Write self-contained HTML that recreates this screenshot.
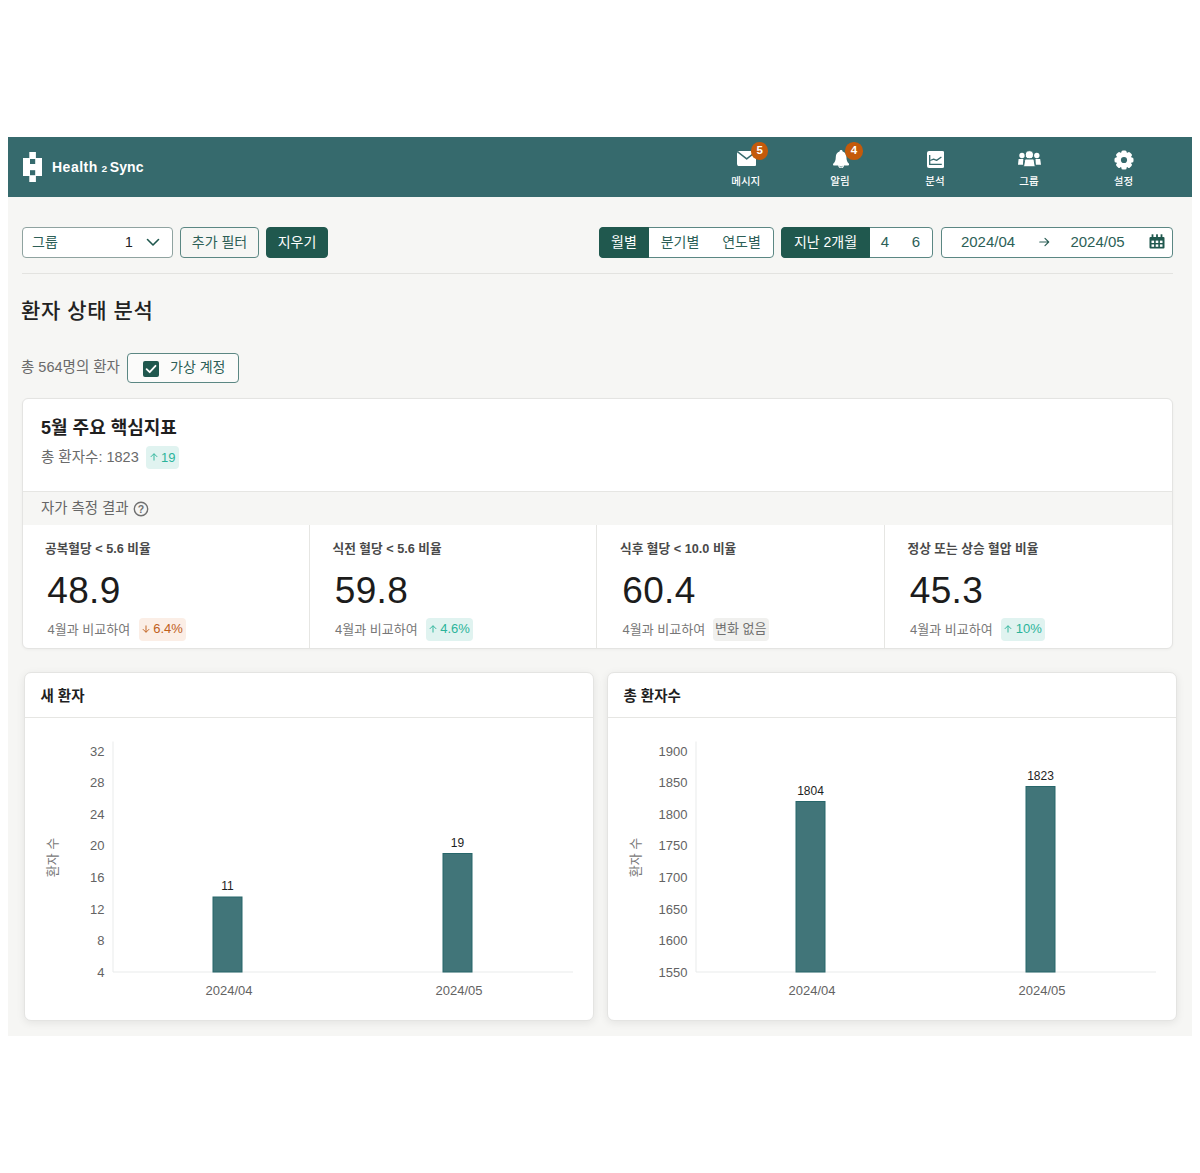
<!DOCTYPE html>
<html lang="ko">
<head>
<meta charset="utf-8">
<title>Health2Sync</title>
<style>
*{box-sizing:border-box;margin:0;padding:0}
html,body{width:1200px;height:1173px;background:#fff;overflow:hidden}
body{font-family:"Liberation Sans","Noto Sans CJK KR",sans-serif;color:#222;position:relative}
.abs,.t{position:absolute}
.t{white-space:nowrap;line-height:1}
#bg{position:absolute;left:8px;top:137px;width:1184px;height:899px;background:#f6f6f4}
#hdr{position:absolute;left:8px;top:137px;width:1184px;height:60px;background:#366a6d}
.nav{position:absolute;top:0;height:60px;width:80px;color:#fff;text-align:center}
.nav .lbl{position:absolute;left:0;right:0;top:38px;font-size:10px;line-height:12px;color:#fff}
.badge{position:absolute;width:17.400px;height:17.400px;border-radius:50%;background:#c45a0b;color:#fff;font-size:11.500px;line-height:17.400px;text-align:center;font-weight:700}
.navl{width:80px;text-align:center;font-size:10.500px;font-weight:500;line-height:12px;color:#fff}
.seg{font-size:14px;line-height:31px;text-align:center;color:#2d5f57}
.klabel{font-size:12.700px;font-weight:700;color:#4a4a4a}
.knum{letter-spacing:.3px;font-size:37px;color:#1c1c1c}
.kcmp{font-size:13px;color:#777}
.kb{position:absolute;height:22.500px;line-height:22.500px;border-radius:4px;font-size:13px;text-align:center;white-space:nowrap}
.kb.up{background:#e0f3f0;color:#2bb39a}
.kb.down{background:#fbeee6;color:#c0601c}
.kb.none{background:#f0f0ee;color:#707070}
.btn{position:absolute;height:31px;border:1px solid #5b8783;border-radius:4px;background:#f6f6f4;color:#2d5f57;font-size:14px;line-height:29px;text-align:center;white-space:nowrap}
.btn.dark{background:#20584e;border-color:#20584e;color:#fff}
.card{position:absolute;background:#fff;border:1px solid #e4e4e2;border-radius:6px}
.shadow{box-shadow:0 2px 8px rgba(0,0,0,.08)}
</style>
</head>
<body>
<div id="bg"></div>
<div id="hdr"></div>

<svg class="abs" style="left:23px;top:152px" width="19" height="30" viewBox="0 0 19 30"><g fill="#fff"><rect x="6.3" y="0" width="6.6" height="6.2"/><rect x="0" y="6" width="19" height="18"/><rect x="6.3" y="23.8" width="6.6" height="6.2"/></g><rect x="7" y="7" width="5.2" height="5" fill="#366a6d"/><rect x="7" y="18.2" width="5.2" height="5" fill="#366a6d"/></svg>
<div class="t" style="left:52px;top:160px;font-size:14px;font-weight:700;color:#fff;letter-spacing:.5px">Health<span style="display:inline-block;font-size:8.500px;font-weight:700;margin:0 3.200px 0 4px;letter-spacing:0;transform:scaleX(1.200)">2</span><span style="letter-spacing:.1px">Sync</span></div>

<svg class="abs" style="left:736.7px;top:151px" width="19.4" height="15.2" viewBox="0 0 19.4 15.2"><rect width="19.4" height="15.2" rx="2.4" fill="#fff"/><path d="M0.3 0.6 L9.7 7.9 L19.1 0.6" fill="none" stroke="#366a6d" stroke-width="1.5" stroke-linejoin="round"/></svg>
<div class="badge" style="left:751px;top:142.200px">5</div>
<div class="t navl" style="left:705.8px;top:175px">메시지</div>

<svg class="abs" style="left:832.800px;top:149.900px" width="16.400" height="18.400" viewBox="0 0 16.400 18.400"><path fill="#fff" d="M8.100 0 C9 0 9.600 .600 9.600 1.400 C12 2.100 13.400 4.200 13.400 6.800 C13.400 10.600 14.400 12.200 15.800 13.500 C16.500 14.200 16.200 15.600 15.100 15.600 L11 15.600 C10.900 17.200 9.700 18.300 8.100 18.300 C6.500 18.300 5.300 17.200 5.200 15.600 L1.100 15.600 C0 15.600 -.300 14.200 .400 13.500 C1.800 12.200 2.800 10.600 2.800 6.800 C2.800 4.200 4.200 2.100 6.600 1.400 C6.600 .600 7.200 0 8.100 0 Z"/><path d="M6.700 15.900 C6.800 16.600 7.400 17.100 8.100 17.100 C8.800 17.100 9.400 16.600 9.500 15.900" fill="none" stroke="#366a6d" stroke-width=".700"/></svg>
<div class="badge" style="left:845.200px;top:142.200px">4</div>
<div class="t navl" style="left:800px;top:175px">알림</div>

<svg class="abs" style="left:926.8px;top:151.1px" width="17.4" height="17" viewBox="0 0 17.4 17"><rect width="17.4" height="17" rx="2" fill="#fff"/><path d="M2.7 3.9 V13.4 H14.8" fill="none" stroke="#366a6d" stroke-width="1.3"/><path d="M3.2 9.5 L6.6 8.1 L9.6 9.4 L14.4 6" fill="none" stroke="#366a6d" stroke-width="1.3" stroke-linejoin="round"/></svg>
<div class="t navl" style="left:895px;top:175px">분석</div>

<svg class="abs" style="left:1017px;top:150px" width="25" height="18" viewBox="0 0 25 18"><g fill="#fff"><circle cx="5" cy="5.5" r="2.7"/><path d="M1.600 9 H6.300 L6 14.700 H1 Z"/><circle cx="19.800" cy="5.500" r="2.700"/><path d="M18.500 9 H23.200 L24 14.700 H18.800 Z"/></g><g fill="#fff" stroke="#366a6d" stroke-width="1"><circle cx="12.400" cy="4.800" r="4.100"/><path d="M9.300 9 H15.500 C16.500 9 17 9.600 17.200 10.500 L18.300 16.800 H6.500 L7.600 10.500 C7.800 9.600 8.300 9 9.300 9 Z"/></g></svg>
<div class="t navl" style="left:989px;top:175px">그룹</div>

<svg class="abs" style="left:1113.800px;top:149.900px" width="20" height="20" viewBox="-10 -10 20 20"><g fill="#fff"><circle r="7.900"/><rect x="-2.600" y="-9.500" width="5.200" height="5" rx="1.500" transform="rotate(0)"/><rect x="-2.600" y="-9.500" width="5.200" height="5" rx="1.500" transform="rotate(45)"/><rect x="-2.600" y="-9.500" width="5.200" height="5" rx="1.500" transform="rotate(90)"/><rect x="-2.600" y="-9.500" width="5.200" height="5" rx="1.500" transform="rotate(135)"/><rect x="-2.600" y="-9.500" width="5.200" height="5" rx="1.500" transform="rotate(180)"/><rect x="-2.600" y="-9.500" width="5.200" height="5" rx="1.500" transform="rotate(225)"/><rect x="-2.600" y="-9.500" width="5.200" height="5" rx="1.500" transform="rotate(270)"/><rect x="-2.600" y="-9.500" width="5.200" height="5" rx="1.500" transform="rotate(315)"/></g><circle r="3.100" fill="#366a6d"/></svg>
<div class="t navl" style="left:1083.500px;top:175px">설정</div>
<!--HEADER-->

<div class="btn" style="left:22px;top:227px;width:151px;background:#fff;border-color:#8fa3a0"></div>
<div class="t" style="left:32px;top:235px;font-size:14px;color:#2d5f57">그룹</div>
<div class="t" style="left:125px;top:235px;font-size:14px;color:#222">1</div>
<svg class="abs" style="left:146px;top:238px" width="14" height="9" viewBox="0 0 14 9"><path d="M1.500 1.500 L7 7 L12.500 1.500" fill="none" stroke="#20584e" stroke-width="1.600" stroke-linecap="round" stroke-linejoin="round"/></svg>
<div class="btn" style="left:180px;top:227px;width:79px">추가 필터</div>
<div class="btn dark" style="left:266px;top:227px;width:62px">지우기</div>

<div class="btn" style="left:599px;top:227px;width:175px;background:#fff"></div>
<div class="btn dark" style="left:599px;top:227px;width:50px;border-radius:4px 0 0 4px">월별</div>
<div class="t seg" style="left:650px;top:227px;width:60px">분기별</div>
<div class="t seg" style="left:711px;top:227px;width:61px">연도별</div>

<div class="btn" style="left:781px;top:227px;width:152px;background:#fff"></div>
<div class="btn dark" style="left:781px;top:227px;width:89px;border-radius:4px 0 0 4px">지난 2개월</div>
<div class="t seg" style="left:870px;top:226.300px;width:30px;font-size:15px">4</div>
<div class="t seg" style="left:901px;top:226.300px;width:30px;font-size:15px">6</div>

<div class="btn" style="left:941px;top:227px;width:232px;background:#fff"></div>
<div class="t seg" style="left:958px;top:226px;width:60px;font-size:15px">2024/04</div>
<svg class="abs" style="left:1038.700px;top:236.500px" width="11" height="10" viewBox="0 0 11 10"><path d="M0.800 5 H9.600 M6 1.400 L9.700 5 L6 8.600" fill="none" stroke="#2d5f57" stroke-width="1.200" stroke-linecap="round" stroke-linejoin="round"/></svg>
<div class="t seg" style="left:1067.500px;top:226px;width:60px;font-size:15px">2024/05</div>
<svg class="abs" style="left:1149px;top:234px" width="16" height="15" viewBox="0 0 16 15"><g fill="#20584e"><rect x="0.500" y="3" width="15" height="11.500" rx="1"/><rect x="2.600" y="0.300" width="1.800" height="4" /><rect x="7.100" y="0.300" width="1.800" height="4"/><rect x="11.600" y="0.300" width="1.800" height="4"/></g><g fill="#fff"><rect x="2.500" y="6.600" width="2.600" height="2.400"/><rect x="6.700" y="6.600" width="2.600" height="2.400"/><rect x="10.900" y="6.600" width="2.600" height="2.400"/><rect x="2.500" y="10.400" width="2.600" height="2.400"/><rect x="6.700" y="10.400" width="2.600" height="2.400"/><rect x="10.900" y="10.400" width="2.600" height="2.400"/></g></svg>

<div class="abs" style="left:22px;top:273px;width:1151px;height:1px;background:#e3e3e0"></div>
<!--FILTER-->

<div class="t" style="left:21px;top:300px;font-size:21px;letter-spacing:.6px;font-weight:500;color:#222">환자 상태 분석</div>
<div class="t" style="left:21px;top:360px;font-size:14.500px;color:#6a6a6a">총 564명의 환자</div>
<div class="btn" style="left:127px;top:353px;width:112px;height:30px;background:#fbfbfa"></div>
<svg class="abs" style="left:143px;top:361px" width="16" height="16" viewBox="0 0 16 16"><rect width="16" height="16" rx="2" fill="#20584e"/><path d="M3.600 8.200 L6.700 11.200 L12.500 4.800" fill="none" stroke="#fff" stroke-width="1.800" stroke-linecap="round" stroke-linejoin="round"/></svg>
<div class="t" style="left:170px;top:360px;font-size:14px;color:#2d5f57">가상 계정</div>
<!--TITLE-->

<div class="card" style="left:22px;top:398px;width:1151px;height:251px;overflow:hidden;box-shadow:0 1px 3px rgba(0,0,0,.04)">
  <div class="abs" style="left:0;top:92px;width:1149px;height:1px;background:#e6e6e3"></div>
  <div class="abs" style="left:0;top:93px;width:1149px;height:33px;background:#f6f6f4"></div>
  <div class="abs" style="left:286px;top:126px;width:1px;height:124px;background:#e6e6e3"></div>
  <div class="abs" style="left:573px;top:126px;width:1px;height:124px;background:#e6e6e3"></div>
  <div class="abs" style="left:860.600px;top:126px;width:1px;height:124px;background:#e6e6e3"></div>
</div>
<div class="t" style="left:41px;top:419px;font-size:18px;font-weight:700;color:#1f1f1f">5월 주요 핵심지표</div>
<div class="t" style="left:41px;top:450px;font-size:14.500px;color:#6a6a6a">총 환자수: 1823</div>
<div class="kb up" style="left:146px;top:445.500px;width:33px;height:23px;line-height:23px"><svg width="8" height="8" viewBox="0 0 8 8" style="margin-right:3.500px;position:relative;top:-0.500px"><path d="M4 7.500 V0.800 M0.800 3.900 L4 0.700 L7.200 3.900" fill="none" stroke="currentColor" stroke-width="0.950"/></svg>19</div>
<div class="t" style="left:41px;top:500.700px;font-size:14.400px;color:#666">자가 측정 결과</div>
<svg class="abs" style="left:133px;top:501px" width="16" height="16" viewBox="0 0 16 16"><circle cx="8" cy="8" r="6.700" fill="none" stroke="#707070" stroke-width="1.400"/><text x="8" y="11.700" font-size="10.500" font-weight="700" font-family="Liberation Sans, sans-serif" text-anchor="middle" fill="#707070">?</text></svg>
<div class="t klabel" style="left:45.0px;top:542.700px">공복혈당 &lt; 5.6 비율</div>
<div class="t knum" style="left:47.3px;top:572.200px">48.9</div>
<div class="t kcmp" style="left:47.5px;top:622.500px">4월과 비교하여</div>
<div class="kb down" style="left:138.5px;top:618px;width:47.5px"><svg width="8" height="8" viewBox="0 0 8 8" style="margin-right:3.500px;position:relative;top:-0.500px"><path d="M4 0.500 V7.200 M0.800 4.100 L4 7.300 L7.200 4.100" fill="none" stroke="currentColor" stroke-width="0.950"/></svg>6.4%</div>
<div class="t klabel" style="left:332.5px;top:542.700px">식전 혈당 &lt; 5.6 비율</div>
<div class="t knum" style="left:334.8px;top:572.200px">59.8</div>
<div class="t kcmp" style="left:335.0px;top:622.500px">4월과 비교하여</div>
<div class="kb up" style="left:425.5px;top:618px;width:47.5px"><svg width="8" height="8" viewBox="0 0 8 8" style="margin-right:3.500px;position:relative;top:-0.500px"><path d="M4 7.500 V0.800 M0.800 3.900 L4 0.700 L7.200 3.900" fill="none" stroke="currentColor" stroke-width="0.950"/></svg>4.6%</div>
<div class="t klabel" style="left:620.0px;top:542.700px">식후 혈당 &lt; 10.0 비율</div>
<div class="t knum" style="left:622.3px;top:572.200px">60.4</div>
<div class="t kcmp" style="left:622.5px;top:622.500px">4월과 비교하여</div>
<div class="kb none" style="left:712.5px;top:618px;width:56.5px">변화 없음</div>
<div class="t klabel" style="left:907.5px;top:542.700px">정상 또는 상승 혈압 비율</div>
<div class="t knum" style="left:909.8px;top:572.200px">45.3</div>
<div class="t kcmp" style="left:910.0px;top:622.500px">4월과 비교하여</div>
<div class="kb up" style="left:1001px;top:618px;width:44px"><svg width="8" height="8" viewBox="0 0 8 8" style="margin-right:3.500px;position:relative;top:-0.500px"><path d="M4 7.500 V0.800 M0.800 3.900 L4 0.700 L7.200 3.900" fill="none" stroke="currentColor" stroke-width="0.950"/></svg>10%</div>
<!--KPI-->
<div class="card shadow" style="border-radius:7px;left:24px;top:672px;width:570px;height:349px"><div class="abs" style="left:0;top:44px;width:568px;height:1px;background:#e6e6e3"></div></div>
<div class="t" style="left:40.5px;top:689px;font-size:14.500px;font-weight:700;color:#1f1f1f">새 환자</div>
<svg class="abs" style="left:24px;top:672px" width="569" height="348" viewBox="24 672 569 348" font-family="Liberation Sans, 'Noto Sans CJK KR', sans-serif">
<path d="M113.0 741.500 V972 H573.0" fill="none" stroke="#e9ebeb" stroke-width="1"/>
<text x="104.5" y="976.7" font-size="13" fill="#636363" text-anchor="end">4</text>
<text x="104.5" y="945.1" font-size="13" fill="#636363" text-anchor="end">8</text>
<text x="104.5" y="913.6" font-size="13" fill="#636363" text-anchor="end">12</text>
<text x="104.5" y="882.0" font-size="13" fill="#636363" text-anchor="end">16</text>
<text x="104.5" y="850.4" font-size="13" fill="#636363" text-anchor="end">20</text>
<text x="104.5" y="818.9" font-size="13" fill="#636363" text-anchor="end">24</text>
<text x="104.5" y="787.3" font-size="13" fill="#636363" text-anchor="end">28</text>
<text x="104.5" y="755.7" font-size="13" fill="#636363" text-anchor="end">32</text>
<rect x="213.0" y="897.0" width="29" height="75.0" fill="#417579" stroke="#27666a" stroke-width="1"/>
<text x="227.5" y="890.0" font-size="12" fill="#1d1d1d" text-anchor="middle">11</text>
<rect x="443.0" y="853.5" width="29" height="118.5" fill="#417579" stroke="#27666a" stroke-width="1"/>
<text x="457.5" y="846.5" font-size="12" fill="#1d1d1d" text-anchor="middle">19</text>
<text x="229" y="995" font-size="13" fill="#636363" text-anchor="middle">2024/04</text>
<text x="459" y="995" font-size="13" fill="#636363" text-anchor="middle">2024/05</text>
<text transform="translate(56.5 857.500) rotate(-90)" font-size="13" fill="#777" text-anchor="middle">환자 수</text>
</svg>
<div class="card shadow" style="border-radius:7px;left:607px;top:672px;width:570px;height:349px"><div class="abs" style="left:0;top:44px;width:568px;height:1px;background:#e6e6e3"></div></div>
<div class="t" style="left:623.5px;top:689px;font-size:14.500px;font-weight:700;color:#1f1f1f">총 환자수</div>
<svg class="abs" style="left:607px;top:672px" width="569" height="348" viewBox="607 672 569 348" font-family="Liberation Sans, 'Noto Sans CJK KR', sans-serif">
<path d="M696.0 741.500 V972 H1156.0" fill="none" stroke="#e9ebeb" stroke-width="1"/>
<text x="687.5" y="976.7" font-size="13" fill="#636363" text-anchor="end">1550</text>
<text x="687.5" y="945.1" font-size="13" fill="#636363" text-anchor="end">1600</text>
<text x="687.5" y="913.6" font-size="13" fill="#636363" text-anchor="end">1650</text>
<text x="687.5" y="882.0" font-size="13" fill="#636363" text-anchor="end">1700</text>
<text x="687.5" y="850.4" font-size="13" fill="#636363" text-anchor="end">1750</text>
<text x="687.5" y="818.9" font-size="13" fill="#636363" text-anchor="end">1800</text>
<text x="687.5" y="787.3" font-size="13" fill="#636363" text-anchor="end">1850</text>
<text x="687.5" y="755.7" font-size="13" fill="#636363" text-anchor="end">1900</text>
<rect x="796.0" y="801.5" width="29" height="170.5" fill="#417579" stroke="#27666a" stroke-width="1"/>
<text x="810.5" y="794.5" font-size="12" fill="#1d1d1d" text-anchor="middle">1804</text>
<rect x="1026.0" y="786.5" width="29" height="185.5" fill="#417579" stroke="#27666a" stroke-width="1"/>
<text x="1040.5" y="779.5" font-size="12" fill="#1d1d1d" text-anchor="middle">1823</text>
<text x="812" y="995" font-size="13" fill="#636363" text-anchor="middle">2024/04</text>
<text x="1042" y="995" font-size="13" fill="#636363" text-anchor="middle">2024/05</text>
<text transform="translate(640.0 857.500) rotate(-90)" font-size="13" fill="#777" text-anchor="middle">환자 수</text>
</svg>
<!--CHARTS-->
</body>
</html>
